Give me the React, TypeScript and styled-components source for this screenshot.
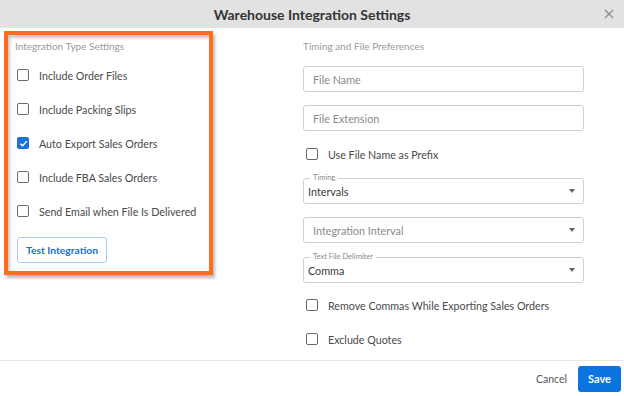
import React from 'react';
import styled, { createGlobalStyle } from 'styled-components';

const GlobalStyle = createGlobalStyle`
  html, body {
    margin: 0;
    padding: 0;
    background: #ffffff;
  }
  body {
    font-family: Lato, 'Open Sans', sans-serif;
    color: #444;
  }
`;

const Dialog = styled.div`
  width: 624px;
  height: 396px;
  display: flex;
  flex-direction: column;
  background: #fff;
  overflow: hidden;
`;

const Header = styled.header`
  position: relative;
  height: 28px;
  flex-shrink: 0;
  background: #e2e2e2;
  display: flex;
  align-items: center;
  justify-content: center;
`;

const Title = styled.h1`
  margin: 0;
  font-size: 14px;
  font-weight: 700;
  color: #333;
`;

const CloseButton = styled.button`
  position: absolute;
  right: 8px;
  top: 7px;
  width: 14px;
  height: 14px;
  padding: 0;
  border: none;
  background: none;
  display: flex;
  align-items: center;
  justify-content: center;
`;

const Body = styled.main`
  flex: 1;
  display: flex;
  align-items: flex-start;
  padding: 3px 0 0 4px;
`;

const Highlight = styled.section`
  width: 209px;
  box-sizing: border-box;
  border: 4px solid #fd6d1d;
  box-shadow: 2px 3px 3px rgba(0, 0, 0, 0.28), inset 2px 3px 3px rgba(0, 0, 0, 0.22);
  padding: 5px 0 8px 7px;
`;

const SectionLabel = styled.div`
  font-size: 10px;
  line-height: 12px;
  color: #9a9a9a;
`;

const RightColumn = styled.section`
  margin-left: 90px;
  width: 281px;
  padding-top: 9px;
`;

const CheckRow = styled.label<{ $indent: number }>`
  height: 34px;
  display: flex;
  align-items: center;
  padding-left: ${p => p.$indent}px;
  font-size: 10.7px;
  color: #4a4a4a;
`;

const Box = styled.span<{ $checked?: boolean }>`
  width: 12px;
  height: 12px;
  box-sizing: border-box;
  border-radius: 2px;
  border: ${p => (p.$checked ? 'none' : '1.5px solid #6b6b6b')};
  background: ${p => (p.$checked ? '#1a73d8' : '#fff')};
  margin-right: 10px;
  display: flex;
  align-items: center;
  justify-content: center;
  flex-shrink: 0;
`;

const CheckList = styled.div`
  margin-top: 6px;
`;

const OutlineButton = styled.button`
  margin: 9px 0 0 2px;
  height: 26px;
  padding: 0 8px;
  border: 1px solid #a9cdf2;
  border-radius: 3px;
  background: #fff;
  color: #1a6fd0;
  font-family: inherit;
  font-size: 10.3px;
  font-weight: 700;
`;

const TextInput = styled.div<{ $top: number }>`
  margin-top: ${p => p.$top}px;
  height: 26px;
  box-sizing: border-box;
  border: 1px solid #cfcfcf;
  border-radius: 3px;
  display: flex;
  align-items: center;
  padding-left: 9px;
  font-size: 10.8px;
  color: #8a8a8a;
`;

const Select = styled.div<{ $top: number }>`
  position: relative;
  margin-top: ${p => p.$top}px;
  height: 26px;
  box-sizing: border-box;
  border: 1px solid #cfcfcf;
  border-radius: 3px;
  display: flex;
  align-items: center;
  justify-content: space-between;
  padding: 0 8px 0 4px;
`;

const SelectValue = styled.span<{ $placeholder?: boolean }>`
  font-size: 10.8px;
  padding-left: ${p => (p.$placeholder ? 5 : 0)}px;
  color: ${p => (p.$placeholder ? '#8a8a8a' : '#3a3a3a')};
`;

const FloatLabel = styled.span`
  position: absolute;
  left: 6px;
  top: -6px;
  padding: 0 3px;
  background: #fff;
  font-size: 7.5px;
  line-height: 10px;
  color: #8a8a8a;
`;

const Caret = styled.span`
  width: 0;
  height: 0;
  border-left: 3.5px solid transparent;
  border-right: 3.5px solid transparent;
  border-top: 4px solid #666;
`;

const RightChecks = styled.div<{ $top: number }>`
  margin-top: ${p => p.$top}px;
`;

const Footer = styled.footer`
  height: 36px;
  flex-shrink: 0;
  border-top: 1px solid #e6e6e6;
  box-sizing: border-box;
  display: flex;
  align-items: center;
  justify-content: flex-end;
  padding-right: 3px;
  gap: 11px;
`;

const TextButton = styled.button`
  border: none;
  background: none;
  padding: 0;
  font-family: inherit;
  font-size: 10.5px;
  color: #555;
`;

const PrimaryButton = styled.button`
  width: 43px;
  height: 26px;
  border: none;
  border-radius: 3px;
  background: #0b74de;
  color: #fff;
  font-family: inherit;
  font-size: 11px;
  font-weight: 700;
`;

const Check = ({ label, checked, indent }: { label: string; checked?: boolean; indent: number }) => (
  <CheckRow $indent={indent}>
    <Box $checked={checked}>
      {checked && (
        <svg width="9" height="9" viewBox="0 0 10 10">
          <path d="M1.5 5.2 L4 7.5 L8.6 2.6" fill="none" stroke="#fff" strokeWidth="1.6" />
        </svg>
      )}
    </Box>
    {label}
  </CheckRow>
);

export default function App() {
  return (
    <>
      <GlobalStyle />
      <Dialog>
        <Header>
          <Title>Warehouse Integration Settings</Title>
          <CloseButton aria-label="Close">
            <svg width="10" height="10" viewBox="0 0 10 10">
              <path d="M1 1 L9 9 M9 1 L1 9" stroke="#8a8a8a" strokeWidth="1.2" />
            </svg>
          </CloseButton>
        </Header>

        <Body>
          <Highlight>
            <SectionLabel>Integration Type Settings</SectionLabel>
            <CheckList>
              <Check indent={2} label="Include Order Files" />
              <Check indent={2} label="Include Packing Slips" />
              <Check indent={2} label="Auto Export Sales Orders" checked />
              <Check indent={2} label="Include FBA Sales Orders" />
              <Check indent={2} label="Send Email when File Is Delivered" />
            </CheckList>
            <OutlineButton>Test Integration</OutlineButton>
          </Highlight>

          <RightColumn>
            <SectionLabel>Timing and File Preferences</SectionLabel>
            <TextInput $top={14}>File Name</TextInput>
            <TextInput $top={13}>File Extension</TextInput>
            <RightChecks $top={6}>
              <Check indent={3} label="Use File Name as Prefix" />
            </RightChecks>
            <Select $top={7}>
              <FloatLabel>Timing</FloatLabel>
              <SelectValue>Intervals</SelectValue>
              <Caret />
            </Select>
            <Select $top={13}>
              <SelectValue $placeholder>Integration Interval</SelectValue>
              <Caret />
            </Select>
            <Select $top={14}>
              <FloatLabel>Text File Delimiter</FloatLabel>
              <SelectValue>Comma</SelectValue>
              <Caret />
            </Select>
            <RightChecks $top={5}>
              <Check indent={3} label="Remove Commas While Exporting Sales Orders" />
              <Check indent={3} label="Exclude Quotes" />
            </RightChecks>
          </RightColumn>
        </Body>

        <Footer>
          <TextButton>Cancel</TextButton>
          <PrimaryButton>Save</PrimaryButton>
        </Footer>
      </Dialog>
    </>
  );
}
